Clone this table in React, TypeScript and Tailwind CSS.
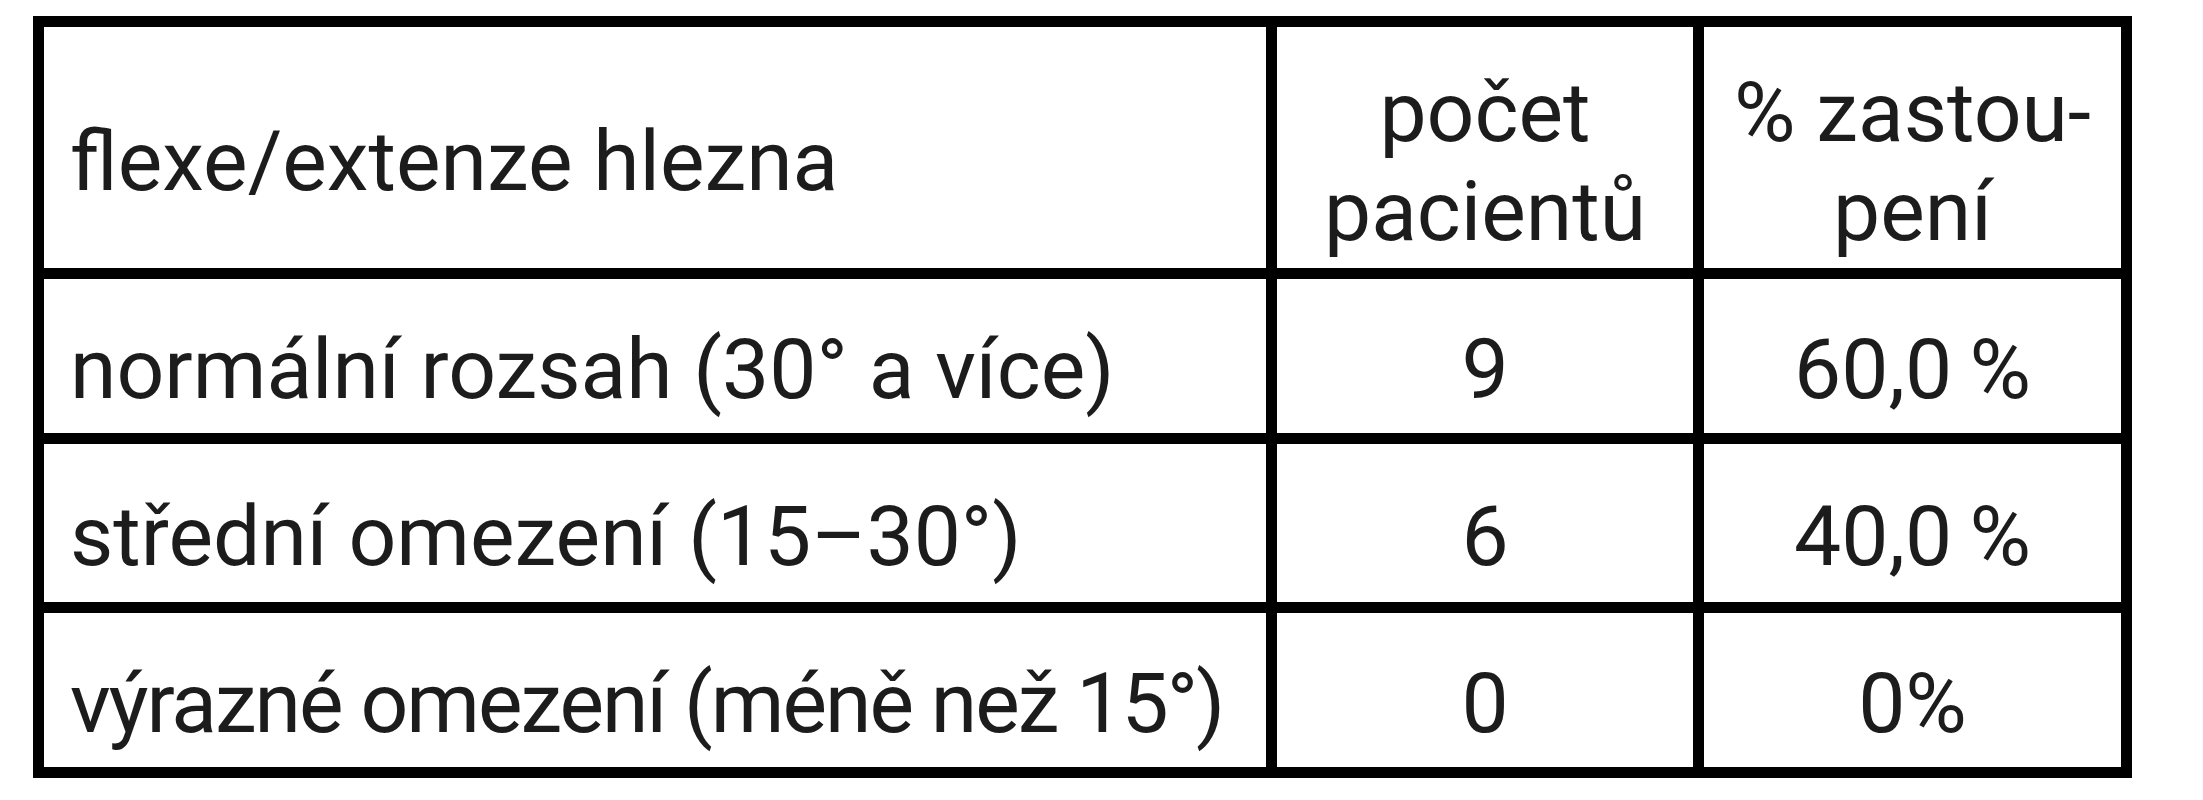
const rows = [
  { label: "normální rozsah (30° a více)", count: "9", share: "60,0\u2009%", tight: false },
  { label: "střední omezení (15–30°)", count: "6", share: "40,0\u2009%", tight: false },
  { label: "výrazné omezení (méně než 15°)", count: "0", share: "0%", tight: true },
];

const rowHeights = ["h-[154px]", "h-[158px]", "h-[154px]"];

export default function App() {
  return (
    <div className="min-h-screen bg-white pl-[33px] pt-[16px] font-['Roboto',sans-serif] text-[84px] leading-[1.172] text-[#1c1c1c]">
      <div className="grid w-[2099px] grid-cols-[1222px_416px_417px] gap-[11px] bg-black p-[11px]">
        {/* header */}
        <div className="flex h-[241px] items-center bg-white pl-[26px] pt-[30px]">
          flexe/extenze hlezna
        </div>
        <div className="flex h-[241px] items-center justify-center bg-white pt-[30px] text-center">
          <div>
            počet
            <br />
            pacientů
          </div>
        </div>
        <div className="flex h-[241px] items-center justify-center bg-white pt-[30px] text-center">
          <div>
            % zastou-
            <br />
            pení
          </div>
        </div>

        {rows.map((row, i) => (
          <div key={row.label} className="contents">
            <div
              className={`flex ${rowHeights[i]} items-center whitespace-nowrap bg-white pl-[26px] pt-[28px] ${
                row.tight ? "tracking-[-2px]" : ""
              }`}
            >
              {row.label}
            </div>
            <div
              className={`flex ${rowHeights[i]} items-center justify-center bg-white pt-[28px]`}
            >
              {row.count}
            </div>
            <div
              className={`flex ${rowHeights[i]} items-center justify-center whitespace-nowrap bg-white pt-[28px]`}
            >
              {row.share}
            </div>
          </div>
        ))}
      </div>
    </div>
  );
}
